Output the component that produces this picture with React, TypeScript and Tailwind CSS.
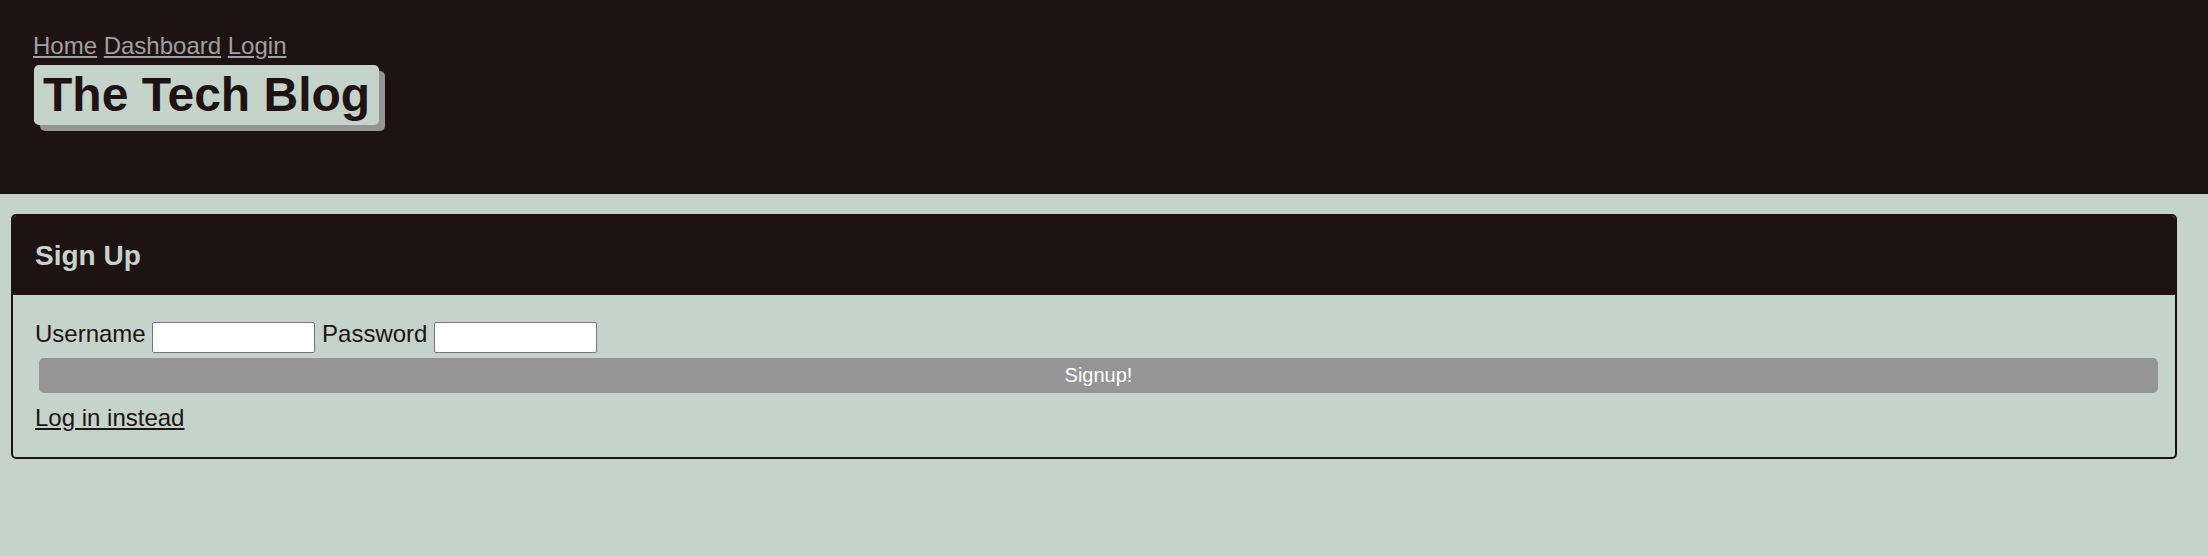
import React from "react";

export default function App() {
  return (
    <div
      className="min-h-[556px] w-full bg-[#c4d4ca] text-[#1e1213]"
      style={{ fontFamily: '"Liberation Sans", Arial, Helvetica, sans-serif' }}
    >
      <header className="h-[194px] bg-[#1e1213] pl-[33px] pt-[32px]">
        <nav className="flex gap-[6.67px] text-[24px] leading-[27px] text-[#a0a0a0]">
          <a href="#" className="underline">Home</a>
          <a href="#" className="underline">Dashboard</a>
          <a href="#" className="underline">Login</a>
        </nav>
        <div className="mt-[6px] ml-[1px] flex">
          <h1 className="rounded-[5px] bg-[#c4d4ca] px-[9px] py-[3px] text-[48px] font-bold leading-[54px] text-[#1e1213] shadow-[6px_6px_0_#959595]">
            The Tech Blog
          </h1>
        </div>
      </header>

      <main className="pt-[20px]">
        <section className="ml-[11px] w-[2166px] overflow-hidden rounded-[5px] border-2 border-[#1e1213]">
          <div className="h-[79px] bg-[#1e1213] pl-[22px] pt-[24px]">
            <h2 className="text-[28px] font-bold leading-[31px] text-[#c4d4ca]">Sign Up</h2>
          </div>
          <div className="pl-[22px] pt-[25px] pb-[26px]">
            <form className="text-[24px] leading-[27px]">
              <div className="flex items-start gap-[6.67px]">
                <label>Username</label>
                <input
                  type="text"
                  className="mt-[2px] h-[31px] w-[163px] rounded-[2px] border border-[#767676] bg-white"
                />
                <label>Password</label>
                <input
                  type="password"
                  className="mt-[2px] h-[31px] w-[163px] rounded-[2px] border border-[#767676] bg-white"
                />
              </div>
              <button
                type="button"
                className="mt-[5px] ml-[4px] block h-[35px] w-[2119px] rounded-[5px] bg-[#959595] text-center text-[20px] leading-[35px] text-white"
              >
                Signup!
              </button>
            </form>
            <a href="#" className="mt-[11px] block w-fit text-[24px] leading-[27px] text-[#1e1213] underline">
              Log in instead
            </a>
          </div>
        </section>
      </main>
    </div>
  );
}
